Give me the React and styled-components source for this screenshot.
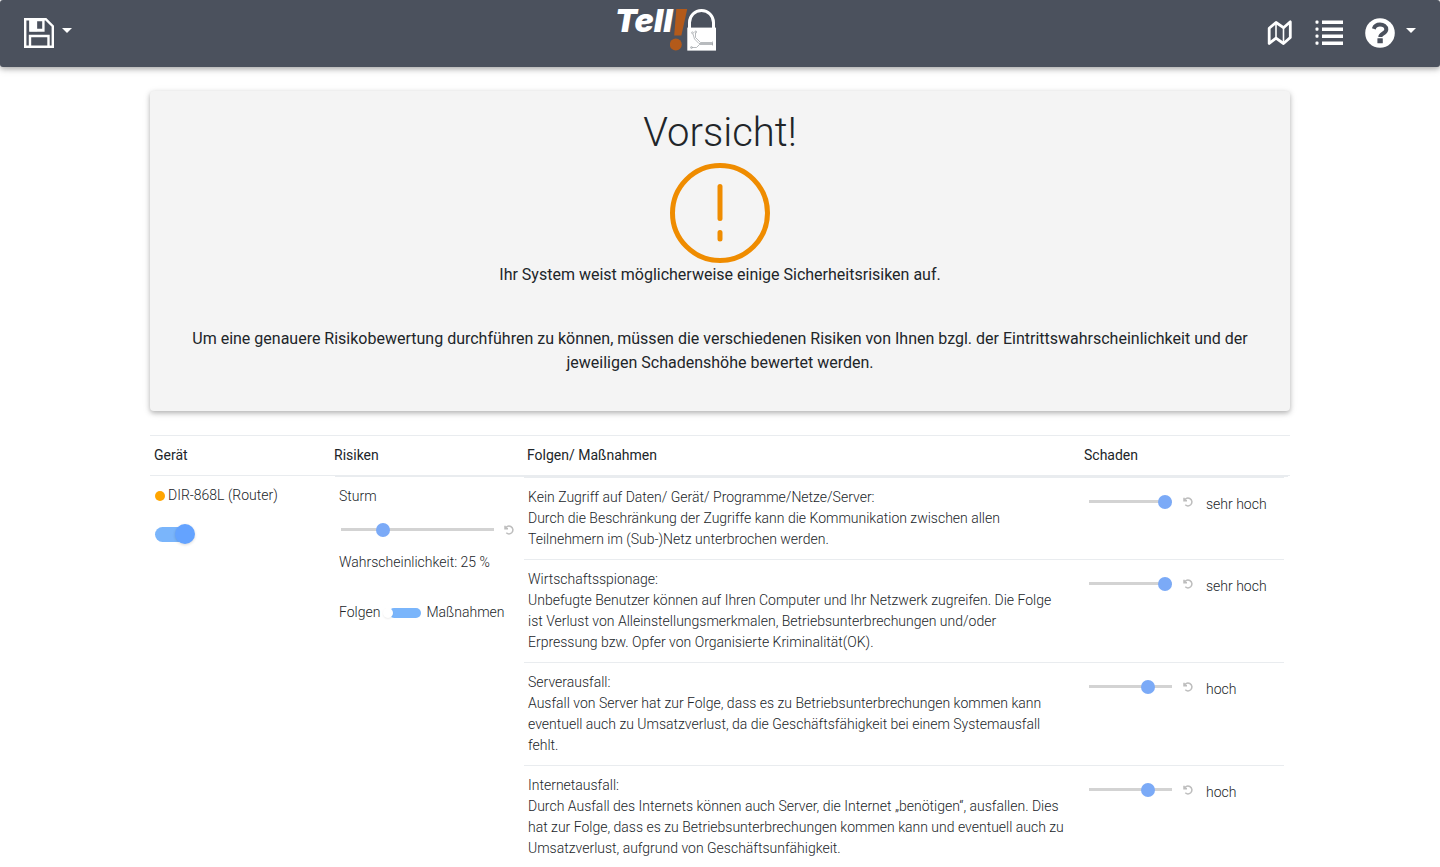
import React, { useState } from 'react';
import styled, { createGlobalStyle } from 'styled-components';

const GlobalStyle = createGlobalStyle`
  *, *::before, *::after { box-sizing: border-box; }
  body {
    margin: 0;
    background: #fff;
    color: #212529;
    font-family: Roboto, "Liberation Sans", sans-serif;
    font-size: 16px;
    font-weight: 300;
    line-height: 24px;
  }
`;

const Navbar = styled.header`
  display: flex;
  align-items: center;
  justify-content: space-between;
  height: 67px;
  padding: 0 24px 2px;
  background: #4b515d;
  border-radius: 3px;
  box-shadow: 0 2px 5px rgba(0, 0, 0, 0.26), 0 2px 10px rgba(0, 0, 0, 0.12);
`;

const NavGroup = styled.nav`
  display: flex;
  align-items: center;
  gap: 22px;
  padding-left: ${(p) => (p.$inset ? '8px' : '0')};
`;

const NavButton = styled.button`
  display: flex;
  align-items: center;
  gap: ${(p) => p.$gap || '0'};
  padding: 0;
  border: 0;
  background: none;
  color: #fff;
  cursor: pointer;

  svg { display: block; }
`;

const CaretIcon = styled.svg`
  margin-bottom: 4px;
`;

const Logo = styled.a`
  display: flex;
  height: 44px;
  margin-bottom: 6px;
  color: #fff;
  text-decoration: none;
`;

const LogoWord = styled.span`
  font-family: Inter, "Open Sans", sans-serif;
  font-size: 32px;
  font-style: italic;
  font-weight: 900;
  line-height: 26px;
  width: 55px;
  white-space: nowrap;
`;

const Page = styled.main`
  max-width: 1140px;
  margin: 0 auto;
  padding-top: 24px;
`;

const Card = styled.section`
  display: flex;
  flex-direction: column;
  align-items: center;
  padding: 18px 36px 36px;
  background: #f4f4f4;
  border-radius: 4px;
  box-shadow: 0 2px 5px rgba(0, 0, 0, 0.26), 0 2px 10px rgba(0, 0, 0, 0.08);
  text-align: center;
`;

const Title = styled.h1`
  margin: 0 0 6px;
  font-size: 40px;
  font-weight: 300;
  line-height: 48px;
`;

const CardText = styled.p`
  margin: 0 0 ${(p) => (p.$spaced ? '40px' : '0')};
  font-weight: 400;
`;

const Table = styled.table`
  width: 100%;
  border-collapse: separate;
  border-spacing: 0;
  table-layout: fixed;
  font-size: 14px;
  line-height: 21px;
`;

const MainTable = styled(Table)`
  margin-top: 24px;
`;

const Col = styled.col`
  width: ${(p) => p.$w || 'auto'};
`;

const HeadCell = styled.th`
  padding: 9px 4px;
  border-top: 1px solid #e9ecef;
  font-weight: 400;
  text-align: left;
`;

const Cell = styled.td`
  padding: ${(p) => p.$pad || '9px 4px'};
  border-top: 1px solid #e9ecef;
  vertical-align: top;
`;

const Device = styled.div`
  display: flex;
  align-items: center;
  gap: 3px;
  padding-left: 1px;
  margin-bottom: 18px;
`;

const Dot = styled.span`
  width: 10px;
  height: 10px;
  border-radius: 50%;
  background: #ffa500;
`;

const Switch = styled.input`
  appearance: none;
  display: block;
  position: relative;
  width: 40px;
  height: 20px;
  margin: 0 0 0 1px;
  cursor: pointer;

  &::before {
    content: '';
    position: absolute;
    inset: 3px 2px 2px 0;
    border-radius: 8px;
    background: #7ab5fb;
  }

  &::after {
    content: '';
    position: absolute;
    top: 0;
    left: ${(p) => (p.checked ? '20px' : '0')};
    width: 20px;
    height: 20px;
    border-radius: 50%;
    background: #64a3ff;
    box-shadow: 0 1px 3px rgba(0, 0, 0, 0.15);
  }
`;

const ViewSwitch = styled.input`
  appearance: none;
  position: relative;
  width: 36px;
  height: 10px;
  margin: 0;
  cursor: pointer;

  &::before {
    content: '';
    position: absolute;
    inset: 0 0 0 4px;
    border-radius: 5px;
    background: #7ab5fb;
  }

  &::after {
    content: '';
    position: absolute;
    top: 0;
    left: ${(p) => (p.checked ? '26px' : '-2px')};
    width: 10px;
    height: 10px;
    border-radius: 50%;
    background: #fff;
    box-shadow: 0 1px 2px rgba(0, 0, 0, 0.08);
  }
`;

const RiskLine = styled.div`
  margin-top: ${(p) => p.$top || '0'};
`;

const SwitchLabel = styled.label`
  display: flex;
  align-items: center;
  gap: 5px;
  margin-top: 29px;
`;

const SliderRow = styled.div`
  display: flex;
  align-items: flex-start;
  gap: ${(p) => p.$gap || '11px'};
  margin-top: ${(p) => p.$top || '0'};
  padding-left: ${(p) => p.$indent || '0'};
`;

const Range = styled.input`
  appearance: none;
  flex: none;
  width: ${(p) => p.$w};
  height: 15px;
  margin: 0;
  background: linear-gradient(#d3d3d3, #d3d3d3) center / 100% 3px no-repeat;
  cursor: pointer;

  &::-webkit-slider-thumb {
    appearance: none;
    width: 14px;
    height: 14px;
    margin-top: 1px;
    border-radius: 50%;
    background: #7baaf7;
  }
`;

const ResetButton = styled.button`
  display: flex;
  align-items: center;
  height: 15px;
  padding: 0;
  border: 0;
  background: none;
  color: #bdbdbd;
  cursor: pointer;
`;

const Level = styled.span`
  padding-left: 2px;
  white-space: nowrap;
`;

const Caret = () => (
  <CaretIcon width="10" height="5" viewBox="0 0 10 5" aria-hidden="true">
    <path d="M0 0h10L5 5z" fill="currentColor" />
  </CaretIcon>
);

const SaveIcon = () => (
  <svg width="30" height="30" viewBox="0 0 30 30" fill="none" stroke="currentColor" strokeWidth="2.4">
    <path d="M1.2 1.2h20.6l7 7v20.6H1.2z" />
    <path d="M6.4 1.2v11.3h13V1.2M6 28.8V18h18.500v10.800" />
    <path d="M6.400 1.500h6v11h-6zM12 2.500h7M12 11.500h7" fill="currentColor" strokeWidth="1.500" />
  </svg>
);

const MapIcon = () => (
  <svg width="26" height="28" viewBox="0 0 26 28" fill="none" stroke="currentColor" strokeLinejoin="round">
    <path d="M2.200 9.200 9 3.500l7.500 5.200L23.300 2.800V18.500L16.500 24.500 9 19.200 2.200 24.500z" strokeWidth="2.800" />
    <path d="M9 3.500v15.500M16.500 8.500v16" strokeWidth="1.600" />
  </svg>
);

const ListIcon = () => (
  <svg width="28" height="26" viewBox="0 0 28 26" fill="currentColor">
    {[0, 7, 14, 21].map((y) => (
      <React.Fragment key={y}>
        <rect x="0.500" y={y + 0.600} width="3" height="3.200" rx="1" />
        <rect x="7" y={y + 0.500} width="21" height="3.500" />
      </React.Fragment>
    ))}
  </svg>
);

const HelpIcon = () => (
  <svg width="30" height="30" viewBox="0 0 30 30">
    <circle cx="15" cy="15" r="14.800" fill="currentColor" />
    <path d="M8.800 10.800C9.800 7.900 12 6.600 15 6.600c3.500 0 6.300 1.900 6.300 4.900 0 4.100-6 3.900-6 7.400" fill="none" stroke="#4b515d" strokeWidth="4" />
    <rect x="12.400" y="20.300" width="5.400" height="5" rx="0.500" fill="#4b515d" />
  </svg>
);

const LogoMark = () => (
  <svg width="46" height="44" viewBox="0 0 46 44" aria-hidden="true">
    <path d="M6.300 1H17.200L11.400 27.500H4.200z" fill="#b35a1a" />
    <ellipse cx="5.800" cy="36.500" rx="6" ry="6" fill="#b35a1a" />
    <path d="M19.500 21V14.500a12 12 0 0 1 24 0V21" fill="none" stroke="#fff" strokeWidth="3" />
    <rect x="17.300" y="19.600" width="28.700" height="23" fill="#fff" />
    <g fill="none" stroke="#9a9da2" strokeWidth="0.700">
      <path d="M23 26l1.500 5 4.500 4.500H43M21.500 39.500h5l3-3H43M25.500 25v4.500l5 5H42" />
      <circle cx="22.500" cy="24.800" r="0.900" />
      <circle cx="25.700" cy="24" r="0.900" />
      <circle cx="21.500" cy="39.500" r="0.900" />
      <path d="M42.500 33.500v4" />
    </g>
  </svg>
);

const WarningIcon = () => (
  <svg width="100" height="100" viewBox="0 0 100 100" fill="none" stroke="#ef8c00" role="img" aria-label="Warnung">
    <circle cx="50" cy="50" r="47.500" strokeWidth="5" />
    <path d="M50 23.500v32M50 69.500v6.500" strokeWidth="5" strokeLinecap="round" />
  </svg>
);

const ResetIcon = () => (
  <svg width="10" height="10" viewBox="0 0 10 10" fill="none" stroke="currentColor" strokeWidth="1.500">
    <path d="M1 .700V3.700H4M1.300 3.500C2.500 1 5 .600 6.800 1.500 9.300 2.800 9.500 6 7.700 7.700 6 9.200 3.700 9 2.300 7.700" />
  </svg>
);

const consequences = [
  {
    title: 'Kein Zugriff auf Daten/ Gerät/ Programme/Netze/Server:',
    text: 'Durch die Beschränkung der Zugriffe kann die Kommunikation zwischen allen Teilnehmern im (Sub-)Netz unterbrochen werden.',
    level: 4,
  },
  {
    title: 'Wirtschaftsspionage:',
    text: 'Unbefugte Benutzer können auf Ihren Computer und Ihr Netzwerk zugreifen. Die Folge ist Verlust von Alleinstellungsmerkmalen, Betriebsunterbrechungen und/oder Erpressung bzw. Opfer von Organisierte Kriminalität(OK).',
    level: 4,
  },
  {
    title: 'Serverausfall:',
    text: 'Ausfall von Server hat zur Folge, dass es zu Betriebsunterbrechungen kommen kann eventuell auch zu Umsatzverlust, da die Geschäftsfähigkeit bei einem Systemausfall fehlt.',
    level: 3,
  },
  {
    title: 'Internetausfall:',
    text: 'Durch Ausfall des Internets können auch Server, die Internet „benötigen“, ausfallen. Dies hat zur Folge, dass es zu Betriebsunterbrechungen kommen kann und eventuell auch zu Umsatzverlust, aufgrund von Geschäftsunfähigkeit.',
    level: 3,
  },
];

const levelNames = ['sehr niedrig', 'niedrig', 'mittel', 'hoch', 'sehr hoch'];

function ConsequenceRow({ item }) {
  const [level, setLevel] = useState(item.level);
  return (
    <tr>
      <Cell $pad="9px 19px 9px 4px">
        {item.title}
        <br />
        {item.text}
      </Cell>
      <Cell $pad="16px 4px">
        <SliderRow>
          <Range
            type="range"
            min="0"
            max="4"
            $w="83px"
            value={level}
            aria-label={`Schaden ${item.title}`}
            onChange={(e) => setLevel(Number(e.target.value))}
          />
          <ResetButton type="button" aria-label="Zurücksetzen" onClick={() => setLevel(item.level)}>
            <ResetIcon />
          </ResetButton>
          <Level>{levelNames[level]}</Level>
        </SliderRow>
      </Cell>
    </tr>
  );
}

export default function App() {
  const [active, setActive] = useState(true);
  const [measures, setMeasures] = useState(false);
  const [probability, setProbability] = useState(25);

  return (
    <>
      <GlobalStyle />
      <Navbar>
        <NavGroup>
          <NavButton type="button" $gap="8px" aria-label="Speichern">
            <SaveIcon />
            <Caret />
          </NavButton>
        </NavGroup>
        <Logo href="#">
          <LogoWord>Tell</LogoWord>
          <LogoMark />
        </Logo>
        <NavGroup $inset>
          <NavButton type="button" aria-label="Karte">
            <MapIcon />
          </NavButton>
          <NavButton type="button" aria-label="Liste">
            <ListIcon />
          </NavButton>
          <NavButton type="button" $gap="11px" aria-label="Hilfe">
            <HelpIcon />
            <Caret />
          </NavButton>
        </NavGroup>
      </Navbar>
      <Page>
        <Card>
          <Title>Vorsicht!</Title>
          <WarningIcon />
          <CardText $spaced>Ihr System weist möglicherweise einige Sicherheitsrisiken auf.</CardText>
          <CardText>
            Um eine genauere Risikobewertung durchführen zu können, müssen die verschiedenen Risiken von Ihnen bzgl. der
            Eintrittswahrscheinlichkeit und der jeweiligen Schadenshöhe bewertet werden.
          </CardText>
        </Card>
        <MainTable>
          <colgroup>
            <Col $w="180px" />
            <Col $w="193px" />
            <Col />
            <Col $w="210px" />
          </colgroup>
          <thead>
            <tr>
              <HeadCell scope="col">Gerät</HeadCell>
              <HeadCell scope="col">Risiken</HeadCell>
              <HeadCell scope="col">Folgen/ Maßnahmen</HeadCell>
              <HeadCell scope="col">Schaden</HeadCell>
            </tr>
          </thead>
          <tbody>
            <tr>
              <Cell>
                <Device>
                  <Dot />
                  DIR-868L (Router)
                </Device>
                <Switch
                  type="checkbox"
                  aria-label="DIR-868L (Router)"
                  checked={active}
                  onChange={(e) => setActive(e.target.checked)}
                />
              </Cell>
              <Cell colSpan="3" $pad="0 2px 0 5px">
                <Table>
                  <colgroup>
                    <Col $w="189px" />
                    <Col />
                  </colgroup>
                  <tbody>
                    <tr>
                      <Cell>
                        <RiskLine>Sturm</RiskLine>
                        <SliderRow $top="15px" $indent="2px" $gap="10px">
                          <Range
                            type="range"
                            min="0"
                            max="100"
                            $w="153px"
                            value={probability}
                            aria-label="Wahrscheinlichkeit"
                            onChange={(e) => setProbability(Number(e.target.value))}
                          />
                          <ResetButton type="button" aria-label="Zurücksetzen" onClick={() => setProbability(25)}>
                            <ResetIcon />
                          </ResetButton>
                        </SliderRow>
                        <RiskLine $top="15px">Wahrscheinlichkeit: {probability} %</RiskLine>
                        <SwitchLabel>
                          Folgen
                          <ViewSwitch
                            type="checkbox"
                            checked={measures}
                            onChange={(e) => setMeasures(e.target.checked)}
                          />
                          Maßnahmen
                        </SwitchLabel>
                      </Cell>
                      <Cell $pad="0 4px 0 0">
                        <Table>
                          <colgroup>
                            <Col />
                            <Col $w="199px" />
                          </colgroup>
                          <tbody>
                            {consequences.map((item) => (
                              <ConsequenceRow key={item.title} item={item} />
                            ))}
                          </tbody>
                        </Table>
                      </Cell>
                    </tr>
                  </tbody>
                </Table>
              </Cell>
            </tr>
          </tbody>
        </MainTable>
      </Page>
    </>
  );
}
